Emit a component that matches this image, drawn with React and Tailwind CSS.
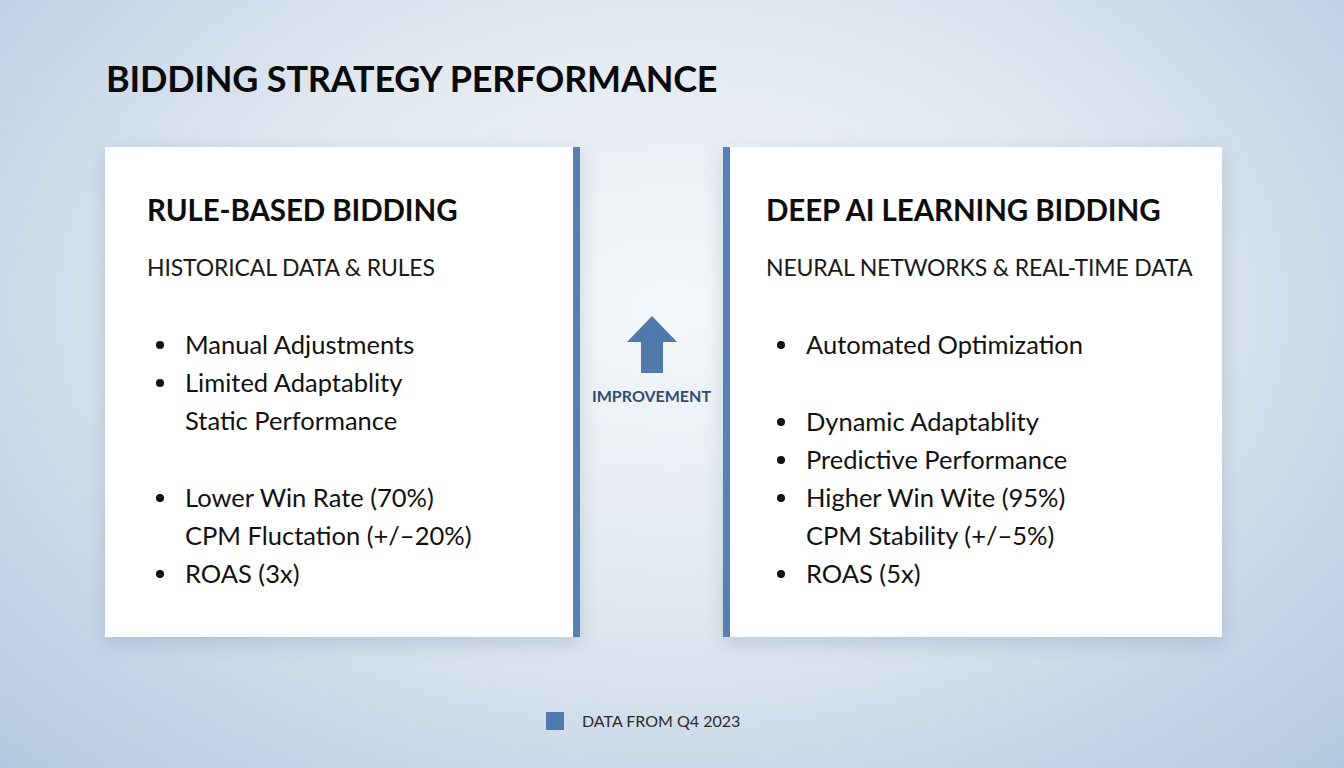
import React from "react";

const LEFT = [
  { text: "Manual Adjustments", bullet: true },
  { text: "Limited Adaptablity", bullet: true },
  { text: "Static Performance", bullet: false },
  { gap: true },
  { text: "Lower Win Rate (70%)", bullet: true },
  { text: "CPM Fluctation (+/\u201320%)", bullet: false },
  { text: "ROAS (3x)", bullet: true },
];

const RIGHT = [
  { text: "Automated Optimization", bullet: true },
  { gap: true },
  { text: "Dynamic Adaptablity", bullet: true },
  { text: "Predictive Performance", bullet: true },
  { text: "Higher Win Wite (95%)", bullet: true },
  { text: "CPM Stability (+/\u20135%)", bullet: false },
  { text: "ROAS (5x)", bullet: true },
];

function BulletList({ items }) {
  return (
    <div className="flex flex-col">
      {items.map((item, i) =>
        item.gap ? (
          <div key={i} className="h-[39px]" />
        ) : (
          <div key={i} className="flex h-[38px] items-center">
            <span className="flex w-[38px] justify-start pl-[9px]">
              {item.bullet && <span className="h-[8px] w-[8px] rounded-full bg-[#111]" />}
            </span>
            <span className="text-[25.5px] leading-none text-[#111]">{item.text}</span>
          </div>
        )
      )}
    </div>
  );
}

function Card({ title, subtitle, items, side }) {
  const border =
    side === "left"
      ? "border-r-[7px] border-[#5580b1] pl-[42px]"
      : "border-l-[7px] border-[#5580b1] pl-[36px]";
  return (
    <div
      className={`h-[490px] bg-white shadow-[0_6px_18px_rgba(40,70,110,0.18)] pt-[48px] ${border}`}>
      <h2 className="text-[29.5px] font-bold leading-none text-[#0d0d0d] tracking-[-0.1px]">
        {title}
      </h2>
      <p className="mt-[31px] text-[23px] leading-none text-[#1a1a1a] tracking-[-0.15px]">
        {subtitle}
      </p>
      <div className={`mt-[47px] ${side === "left" ? "" : "ml-[2px]"}`}>
        <BulletList items={items} />
      </div>
    </div>
  );
}

export default function App() {
  return (
    <div
      className="relative h-[768px] w-full overflow-hidden bg-[radial-gradient(ellipse_at_50%_40%,#f4f7fa_0%,#e2e9f1_45%,#b4c9e0_100%)]"
      style={{ fontFamily: "Lato, 'Open Sans', sans-serif" }}>
      <div className="pl-[106px] pt-[60px]">
        <h1 className="text-[36px] font-bold leading-none text-[#0a0a0a] tracking-[-0.2px]">
          BIDDING STRATEGY PERFORMANCE
        </h1>
      </div>

      <div className="mt-[51px] flex pl-[105px]">
        <div className="w-[475px]">
          <Card
            side="left"
            title="RULE-BASED BIDDING"
            subtitle="HISTORICAL DATA & RULES"
            items={LEFT}
          />
        </div>

        <div className="flex w-[143px] flex-col items-center pt-[169px]">
          <svg width="50" height="58" viewBox="0 0 50 58">
            <path d="M25 0 L50 26 L36 26 L36 57 L14 57 L14 26 L0 26 Z" fill="#4f7aab" />
          </svg>
          <span className="mt-[14px] text-[16px] font-bold leading-none text-[#2e4d73]">
            IMPROVEMENT
          </span>
        </div>

        <div className="w-[499px]">
          <Card
            side="right"
            title="DEEP AI LEARNING BIDDING"
            subtitle="NEURAL NETWORKS & REAL-TIME DATA"
            items={RIGHT}
          />
        </div>
      </div>

      <div className="mt-[75px] flex items-center pl-[546px]">
        <span className="h-[18px] w-[18px] bg-[#4f7aab]" />
        <span className="ml-[18px] text-[16px] leading-none text-[#2a2a2a]">
          DATA FROM Q4 2023
        </span>
      </div>
    </div>
  );
}
